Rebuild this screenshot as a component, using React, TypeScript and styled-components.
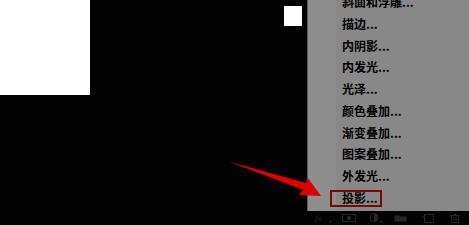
import React from "react";
import styled, { createGlobalStyle } from "styled-components";

const Global = createGlobalStyle`
  html, body { margin: 0; padding: 0; background: #030303; }
  body { width: 469px; height: 225px; overflow: hidden; }
`;

const Stage = styled.div`
  position: relative;
  width: 469px;
  height: 225px;
  display: flex;
  background: #030303;
  overflow: hidden;
  font-family: "Noto Sans CJK SC", "Noto Sans", sans-serif;
`;

const Canvas = styled.div`
  width: 307px;
  flex: none;
  display: flex;
  justify-content: space-between;
  align-items: flex-start;
`;

const WhiteBlock = styled.div<{ $w: number; $h: number; $top?: number; $right?: number }>`
  width: ${(p) => p.$w}px;
  height: ${(p) => p.$h}px;
  margin-top: ${(p) => p.$top ?? 0}px;
  margin-right: ${(p) => p.$right ?? 0}px;
  background: #ffffff;
`;

const Panel = styled.div`
  flex: 1;
  display: flex;
  flex-direction: column;
`;

const Menu = styled.div`
  height: 211px;
  display: flex;
  background: #888888;
  border-left: 1px solid #5a5a5a;
  box-sizing: border-box;
  overflow: hidden;
`;

const Strip = styled.div`
  width: 28px;
  flex: none;
  background: #8e8e8e;
`;

const List = styled.ul`
  list-style: none;
  margin: -9px 0 0;
  padding: 0 0 0 6px;
  display: flex;
  flex-direction: column;
`;

const Item = styled.li<{ $boxed?: boolean }>`
  position: relative;
  height: 21.75px;
  line-height: 21.75px;
  font-size: 12px;
  font-weight: 600;
  color: #000000;
  white-space: nowrap;
  &::before {
    content: "";
    display: ${(p) => (p.$boxed ? "block" : "none")};
    position: absolute;
    left: -12px;
    top: 3px;
    width: 48px;
    height: 13px;
    border: 2px solid #7c0606;
  }
`;

const Toolbar = styled.div`
  height: 14px;
  display: flex;
  align-items: center;
  padding-left: 8px;
`;

const Tool = styled.span<{ $w: number }>`
  width: ${(p) => p.$w}px;
  display: flex;
  align-items: center;
`;

const Arrow = styled.svg`
  position: absolute;
  left: 0;
  top: 0;
  pointer-events: none;
`;

const items = [
  "斜面和浮雕...",
  "描边...",
  "内阴影...",
  "内发光...",
  "光泽...",
  "颜色叠加...",
  "渐变叠加...",
  "图案叠加...",
  "外发光...",
  "投影...",
];

const ic = "#262626";

export default function App() {
  return (
    <>
      <Global />
      <Stage>
        <Canvas>
          <WhiteBlock $w={90} $h={95} />
          <WhiteBlock $w={18} $h={20} $top={6} $right={5} />
        </Canvas>
        <Panel>
          <Menu>
            <Strip />
            <List>
              {items.map((t, i) => (
                <Item key={t} $boxed={i === items.length - 1}>
                  {t}
                </Item>
              ))}
            </List>
          </Menu>
          <Toolbar>
            <Tool $w={27}>
              <svg width="18" height="10" viewBox="0 0 18 10">
                <text x="0" y="8" fontSize="9" fontStyle="italic" fill={ic} fontFamily="Liberation Serif, serif">fx</text>
                <path d="M14 8 L17 8 L15.5 10 Z" fill={ic} />
              </svg>
            </Tool>
            <Tool $w={27}>
              <svg width="14" height="8" viewBox="0 0 14 8">
                <rect x="0.5" y="0.5" width="13" height="7" fill="none" stroke={ic} />
                <circle cx="7" cy="4" r="2.2" fill={ic} />
              </svg>
            </Tool>
            <Tool $w={25}>
              <svg width="16" height="10" viewBox="0 0 16 10">
                <circle cx="5" cy="4.5" r="4" fill="none" stroke={ic} />
                <path d="M5 0.5 A4 4 0 0 1 5 8.5 Z" fill={ic} />
                <path d="M11 8 L14 8 L12.5 10 Z" fill={ic} />
              </svg>
            </Tool>
            <Tool $w={28}>
              <svg width="13" height="8" viewBox="0 0 13 8">
                <path d="M0.5 1.5 H5 L6 2.5 H12.5 V7.5 H0.5 Z" fill={ic} />
              </svg>
            </Tool>
            <Tool $w={28}>
              <svg width="12" height="9" viewBox="0 0 12 9">
                <rect x="2.5" y="0.5" width="9" height="8" fill="none" stroke={ic} />
                <path d="M0 2 L4 6" stroke={ic} />
              </svg>
            </Tool>
            <Tool $w={12}>
              <svg width="10" height="9" viewBox="0 0 10 9">
                <path d="M0 1.5 H10 M1.5 1.5 V8.5 H8.5 V1.5 M4 3 V7 M6 3 V7 M3.5 0.5 H6.5" stroke={ic} fill="none" />
              </svg>
            </Tool>
          </Toolbar>
        </Panel>
        <Arrow width="469" height="225" viewBox="0 0 469 225">
          <path
            d="M229 161.5 L306 183 L308 178 L321 196 L299 195 L303 190 Z"
            fill="#e10000"
          />
        </Arrow>
      </Stage>
    </>
  );
}
